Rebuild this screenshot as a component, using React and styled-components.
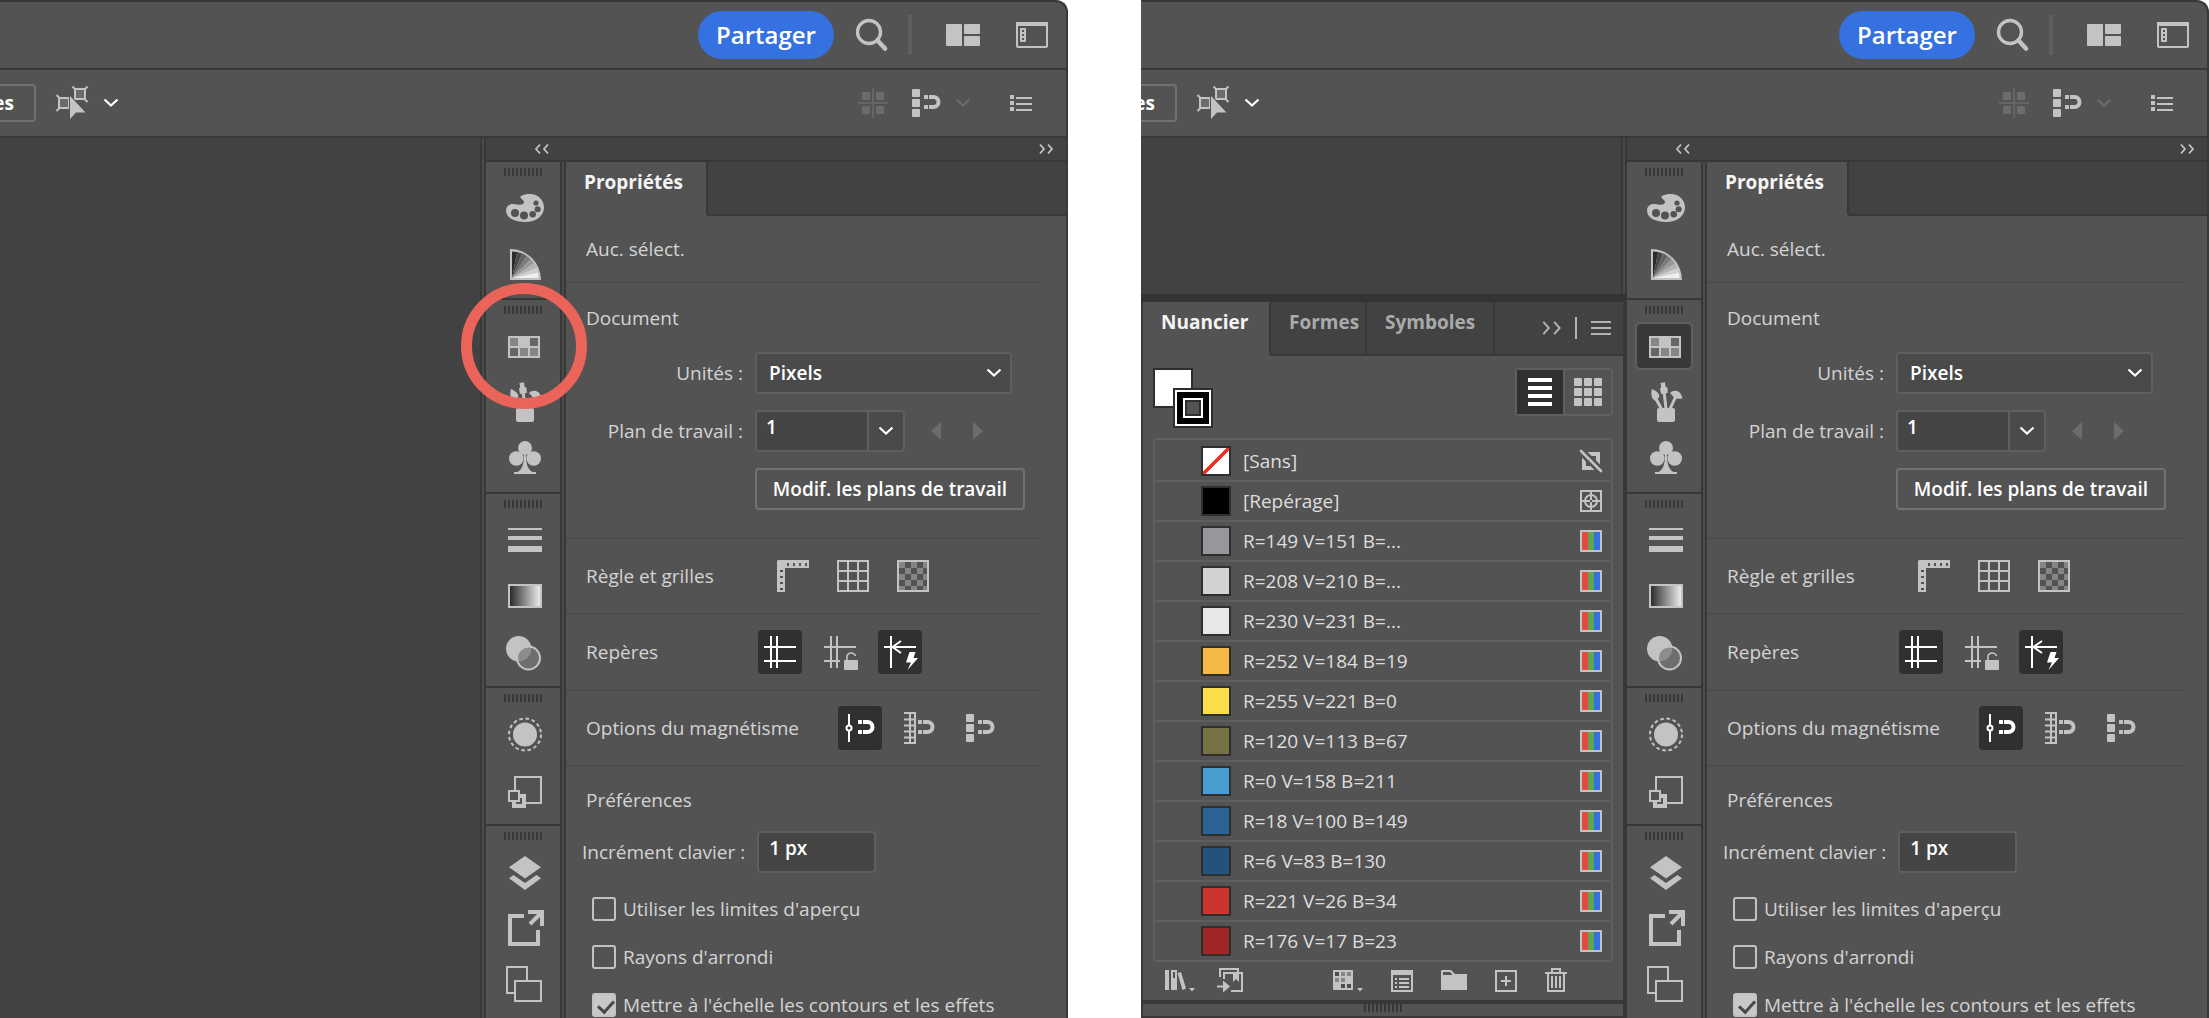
import React from "react";
import styled, { createGlobalStyle, css } from "styled-components";

const c = {
  panel: "#535353",
  canvas: "#424242",
  line: "#383838",
  seam: "#4a4a4a",
  edge: "#5f5f5f",
  icon: "#c3c3c3",
  text: "#d3d3d3",
  dim: "#6c6c6c",
  dark: "#323232",
};

const Global = createGlobalStyle`
  * { box-sizing: border-box; }
  body {
    margin: 0;
    background: #fff;
    overflow: hidden;
    font-family: "Open Sans", "Noto Sans", sans-serif;
    font-size: 19px;
    line-height: 28px;
    font-weight: 500;
    color: ${c.text};
  }
  button, input, select { font: inherit; color: inherit; margin: 0; padding: 0; }
  button { background: none; border: 0; }
  svg { display: block; overflow: visible; flex: none; }
`;

/* ---------- layout ---------- */

const Page = styled.main`
  display: grid;
  grid-template-columns: 1fr 1fr;
  column-gap: 73px;
  height: 100vh;
`;

const Shot = styled.section`
  position: relative;
  min-width: 0;
  min-height: 0;
`;

const AppWindow = styled.div`
  display: flex;
  flex-direction: column;
  height: 100%;
  overflow: hidden;
  background: ${c.panel};
  border: solid ${c.line};
  border-width: 2px 2px 0 0;
  border-radius: 0 12px 0 0;
`;

const Bar = styled.div`
  display: flex;
  align-items: center;
  justify-content: flex-end;
  flex: none;
  height: 68px;
  border-bottom: 2px solid ${c.line};
`;

const HeaderBar = styled(Bar)`
  gap: 20px;
  padding-right: 18px;
`;

const ToolBar = styled(Bar)`
  gap: 24px;
  padding-right: 34px;
`;

const IconButton = styled.button`
  display: flex;
  align-items: center;
  gap: 15px;
  color: ${(p) => (p.$dim ? c.dim : c.icon)};
  padding-left: ${(p) => p.$indent || 0}px;
`;

const ShareButton = styled.button`
  width: 136px;
  height: 48px;
  border-radius: 24px;
  background: #3571e0;
  color: #fff;
  font-size: 24px;
  font-weight: 600;
`;

const BarRule = styled.span`
  width: 4px;
  height: 40px;
  background: ${c.edge};
`;

const IconGroup = styled.div`
  display: flex;
  align-items: center;
  gap: ${(p) => p.$gap}px;
  margin-left: ${(p) => p.$indent || 0}px;
`;

const ToolLeft = styled.div`
  display: flex;
  align-items: center;
  gap: 20px;
  margin-right: auto;
`;

const CutButton = styled.button`
  display: flex;
  align-items: center;
  justify-content: flex-end;
  width: 36px;
  height: 38px;
  padding-right: 20px;
  overflow: hidden;
  border: 2px solid #717171;
  border-left: 0;
  border-radius: 0 4px 4px 0;
  color: #fff;
  font-weight: 700;
`;

const Workspace = styled.div`
  display: flex;
  flex: 1;
  min-height: 0;
`;

const CanvasColumn = styled.div`
  display: flex;
  flex-direction: column;
  flex: 1;
  min-width: 0;
`;

const Canvas = styled.div`
  flex: 1;
  background: ${c.canvas};
  border-right: 2px solid ${c.seam};
  box-shadow: inset -2px 0 0 ${c.line};
`;

const Side = styled.aside`
  display: flex;
  flex-direction: column;
  width: 582px;
  flex: none;
  border-left: 2px solid ${c.line};
`;

const Strip = styled.div`
  display: flex;
  align-items: center;
  justify-content: space-between;
  flex: none;
  height: 24px;
  padding: 0 13px 0 49px;
  background: ${c.canvas};
  border-bottom: 2px solid ${c.line};
  color: ${c.icon};
`;

const SideBody = styled.div`
  display: flex;
  flex: 1;
  min-height: 0;
`;

/* ---------- dock ---------- */

const Dock = styled.nav`
  width: 76px;
  flex: none;
  border-right: 2px solid ${c.line};
`;

const DockGroup = styled.div`
  display: flex;
  flex-direction: column;
  align-items: center;
  padding: 6px 0;
  border-bottom: 2px solid ${c.line};
  &:last-child { border-bottom: 0; }
`;

const Grip = styled.span`
  width: 38px;
  height: 8px;
  background: repeating-linear-gradient(90deg, ${c.line} 0 2px, transparent 2px 4px);
`;

const DockGrip = styled(Grip)`
  margin-bottom: 4px;
`;

const DockCell = styled.div`
  display: flex;
  align-items: center;
  justify-content: center;
  height: 56px;
`;

const DockButton = styled.button`
  display: flex;
  align-items: center;
  justify-content: center;
  width: 58px;
  height: 48px;
  border: 2px solid transparent;
  border-radius: 6px;
  color: ${c.icon};
  --hole: ${c.panel};
  ${(p) =>
    p.$active &&
    css`
      background: ${c.line};
      border-color: ${c.edge};
    `}
`;

/* ---------- properties panel ---------- */

const Properties = styled.section`
  flex: 1;
  min-width: 0;
  margin-left: 2px;
  border-left: 2px solid ${c.line};
  box-shadow: -2px 0 0 ${c.seam};
`;

const TabRow = styled.div`
  display: flex;
  height: 54px;
  background: ${c.canvas};
`;

const Tab = styled.button`
  width: ${(p) => p.$width}px;
  height: 54px;
  flex: none;
  padding: 0 0 12px 18px;
  text-align: left;
  white-space: nowrap;
  font-weight: 700;
  color: ${(p) => (p.$active ? "#f4f4f4" : "#aaaaaa")};
  background: ${(p) => (p.$active ? c.panel : "transparent")};
  border-right: 2px solid ${c.line};
  border-bottom: 2px solid ${(p) => (p.$active ? c.panel : c.line)};
`;

const TabRest = styled.div`
  display: flex;
  align-items: center;
  justify-content: flex-end;
  flex: 1;
  gap: 14px;
  padding-right: 12px;
  padding-bottom: 0;
  border-bottom: 2px solid ${c.line};
  color: #b4b4b4;
`;

const Section = styled.div`
  margin-right: 24px;
  padding: 19px 0 18px 20px;
  border-bottom: 2px solid #4c4c4c;
`;

const DocumentSection = styled(Section)`
  padding-top: 21px;
  padding-bottom: 27px;
`;

const Heading = styled.h2`
  margin: 0;
  font: inherit;
`;

const Form = styled.div`
  display: grid;
  grid-template-columns: 157px auto;
  column-gap: 12px;
  row-gap: 16px;
  align-items: center;
  justify-content: start;
  margin-top: 20px;
`;

const RightLabel = styled.label`
  text-align: right;
  white-space: nowrap;
`;

const SelectBox = styled.div`
  display: flex;
  align-items: center;
  position: relative;
  width: 257px;
  height: 42px;
  color: #fff;
  svg { position: absolute; right: 10px; pointer-events: none; }
`;

const Select = styled.select`
  appearance: none;
  width: 100%;
  height: 42px;
  padding: 0 36px 0 12px;
  background: #4a4a4a;
  border: 2px solid ${c.edge};
  border-radius: 4px;
  font-weight: 600;
`;

const Inline = styled.div`
  display: flex;
  align-items: center;
`;

const TextField = styled.input`
  width: ${(p) => p.$width}px;
  height: 42px;
  padding: 0 0 8px ${(p) => p.$pad}px;
  background: #454545;
  border: 2px solid ${c.edge};
  border-radius: ${(p) => (p.$joined ? "4px 0 0 4px" : "4px")};
  color: #fff;
  font-weight: 600;
`;

const DropButton = styled.button`
  display: flex;
  align-items: center;
  justify-content: center;
  width: 36px;
  height: 42px;
  background: #4a4a4a;
  border: 2px solid ${c.edge};
  border-left: 0;
  border-radius: 0 4px 4px 0;
  color: #fff;
`;

const Steps = styled.div`
  display: flex;
  gap: 32px;
  margin-left: 26px;
`;

const OutlineButton = styled.button`
  grid-column: 2;
  width: 270px;
  height: 42px;
  border: 2px solid #717171;
  border-radius: 4px;
  color: #fff;
  font-weight: 600;
  white-space: nowrap;
`;

const ToggleRow = styled.div`
  display: flex;
  align-items: center;
  height: 76px;
  margin-right: 24px;
  padding-left: 20px;
  border-bottom: 2px solid #4c4c4c;
`;

const ToggleLabel = styled.span`
  width: ${(p) => p.$width}px;
  white-space: nowrap;
`;

const ToggleSet = styled.div`
  display: flex;
  gap: 16px;
`;

const Toggle = styled.button`
  display: flex;
  align-items: center;
  justify-content: center;
  width: 44px;
  height: 44px;
  border-radius: 4px;
  background: ${(p) => (p.$active ? "#303030" : "transparent")};
  color: ${(p) => (p.$active ? "#fff" : c.icon)};
`;

const Preferences = styled.div`
  padding: 19px 0 0 20px;
`;

const KeyRow = styled.div`
  display: flex;
  align-items: center;
  gap: 12px;
  margin: 17px 0 24px -4px;
  white-space: nowrap;
`;

const CheckList = styled.div`
  display: flex;
  flex-direction: column;
  gap: 24px;
  padding-left: 6px;
`;

const CheckLabel = styled.label`
  display: flex;
  align-items: center;
  gap: 7px;
  height: 24px;
  white-space: nowrap;
`;

const CheckBox = styled.input`
  appearance: none;
  position: relative;
  flex: none;
  width: 24px;
  height: 24px;
  border: 2px solid ${c.icon};
  border-radius: 3px;
  &:checked { background: #c8c8c8; }
  &:checked::after {
    content: "";
    position: absolute;
    left: 7px;
    top: 2px;
    width: 7px;
    height: 13px;
    border: solid #484848;
    border-width: 0 3px 3px 0;
    transform: rotate(42deg);
  }
`;

/* ---------- swatches panel ---------- */

const Swatches = styled.section`
  flex: none;
  background: ${c.panel};
  border: solid ${c.line};
  border-width: 0 2px 2px 2px;
`;

const Band = styled.div`
  height: 8px;
  background: #343434;
`;

const SwatchBody = styled.div`
  padding: 12px 10px 0;
`;

const SwatchHead = styled.div`
  display: flex;
  align-items: flex-start;
  justify-content: space-between;
  height: 70px;
`;

const ViewSwitch = styled.div`
  display: flex;
  width: 98px;
  height: 48px;
  border: 2px solid ${c.edge};
  border-radius: 4px;
`;

const ViewButton = styled.button`
  display: flex;
  align-items: center;
  justify-content: center;
  width: ${(p) => (p.$active ? 46 : 48)}px;
  color: ${(p) => (p.$active ? "#fff" : c.icon)};
  background: ${(p) => (p.$active ? "#303030" : "transparent")};
  ${(p) => !p.$active && `border-left: 2px solid ${c.edge};`}
`;

const SwatchList = styled.ul`
  list-style: none;
  margin: 0;
  padding: 2px 1px 0 0;
  border: 2px solid ${c.edge};
  border-radius: 4px;
`;

const SwatchRow = styled.li`
  display: flex;
  align-items: center;
  height: 40px;
  padding: 0 8px 0 46px;
  border-bottom: 2px solid ${c.edge};
  color: #dedede;
  &:last-child { border-bottom-color: transparent; height: 38px; border-bottom-width: 0; }
`;

const Chip = styled.span`
  width: 30px;
  height: 30px;
  margin-right: 12px;
  border: 2px solid #2e2e2e;
  background: ${(p) => p.$color};
`;

const SwatchName = styled.span`
  flex: 1;
  white-space: nowrap;
`;

const Footer = styled.div`
  display: flex;
  align-items: center;
  justify-content: space-between;
  height: 38px;
  padding: 0 56px 2px 22px;
  border-bottom: 0;
`;

const ResizeBar = styled.div`
  display: flex;
  justify-content: center;
  height: 16px;
  border-top: 4px solid ${c.line};
`;

const Ring = styled.div`
  position: absolute;
  left: 461px;
  top: 283px;
  width: 126px;
  height: 126px;
  border: 11px solid #eb6459;
  border-radius: 50%;
  pointer-events: none;
`;

/* ---------- icons ---------- */

const Svg = ({ w, h, children }) => (
  <svg width={w} height={h} viewBox={`0 0 ${w} ${h}`} fill="currentColor" aria-hidden="true">
    {children}
  </svg>
);

const line = (width) => ({ fill: "none", stroke: "currentColor", strokeWidth: width });

const Chevron = () => (
  <Svg w={16} h={10}>
    <path d="M1.5 1.5L8 7.5L14.5 1.5" {...line(2.2)} />
  </Svg>
);

const DoubleChevron = ({ right, w = 14, h = 10 }) => (
  <svg width={w} height={h} viewBox="0 0 14 10" aria-hidden="true">
    <path
      d={right ? "M1 0.5L5 5L1 9.5M9 0.5L13 5L9 9.5" : "M5 0.5L1 5L5 9.5M13 0.5L9 5L13 9.5"}
      {...line(h > 10 ? 1.4 : 1.8)}
    />
  </svg>
);

const SearchIcon = () => (
  <Svg w={34} h={32}>
    <circle cx="15" cy="13" r="11.5" {...line(3.4)} />
    <path d="M23.5 21.5L31 29.5" {...line(4.6)} strokeLinecap="round" />
  </Svg>
);

const LayoutIcon = () => (
  <Svg w={34} h={22}>
    <rect width="16" height="22" rx="1" />
    <rect x="18" width="16" height="10" rx="1" />
    <rect x="18" y="12" width="16" height="10" rx="1" />
  </Svg>
);

const WindowIcon = () => (
  <Svg w={32} h={26}>
    <rect x="1" y="1" width="30" height="24" rx="1" {...line(2)} />
    <rect width="32" height="4" />
    <rect x="4" y="6" width="6" height="14" rx="1" />
    <path d="M6 8h2v2H6zM6 12h2v2H6zM6 16h2v2H6z" fill={c.panel} />
  </Svg>
);

const SelectIcon = () => (
  <Svg w={32} h={34}>
    <rect x="3" y="12" width="10" height="10" fill="#6c6c6c" stroke="currentColor" strokeWidth="2" />
    <rect x="19" y="3" width="10" height="10" fill="#6c6c6c" stroke="currentColor" strokeWidth="2" />
    <path d="M0.5 9L3 11.5M0.5 25L3 22.5M16.5 0.5L19 3M31.5 0.5L29 3M31.5 16L29 13.5" {...line(2)} />
    <path d="M14 10V33L20 26.5L29.5 26.5Z" stroke={c.panel} strokeWidth="2" paintOrder="stroke" />
  </Svg>
);

const AlignIcon = () => (
  <Svg w={30} h={30}>
    <rect x="4" y="4" width="8" height="8" rx="1" />
    <rect x="18" y="4" width="8" height="8" rx="1" />
    <rect x="4" y="18" width="8" height="8" rx="1" />
    <rect x="18" y="18" width="8" height="8" rx="1" />
    <path d="M15 0V30M0 15H30" stroke="#656565" strokeWidth="2" />
  </Svg>
);

const Magnet = () => (
  <>
    <rect x="12" y="6" width="4" height="4" rx="0.5" />
    <rect x="12" y="16" width="4" height="4" rx="0.5" />
    <path d="M17 8H21.5A5 5 0 0 1 21.5 18H17" {...line(4)} />
  </>
);

const PixelSnapShape = () => (
  <>
    <rect width="8" height="8" rx="1" />
    <rect y="10" width="8" height="8" rx="1" />
    <rect y="20" width="8" height="8" rx="1" />
    <Magnet />
  </>
);

const BulletsIcon = () => (
  <Svg w={22} h={16}>
    <path d="M0 0h4v4H0zM0 6h4v4H0zM0 12h4v4H0zM6 2h16v2H6zM6 8h16v2H6zM6 14h16v2H6z" />
  </Svg>
);

const fanTones = ["#2b2b2b", "#484848", "#626262", "#7d7d7d", "#999", "#b4b4b4", "#d0d0d0", "#f0f0f0"];
const fanPoint = (i) => {
  const a = (Math.PI / 2) * (1 - i / fanTones.length);
  return `${9 + 26.5 * Math.cos(a)} ${34 - 26.5 * Math.sin(a)}`;
};

const dockArt = {
  palette: (
    <>
      <path d="M17.5 8.5C20 6.5 24 6 27 6C35 6 41 12 41 19.5C41 28 33 34 22 34C10 34 3 29 3 22.5C3 18 6.5 15.5 11 16C15 16.8 20 17.5 21 14.5C21.5 12 16.5 10.5 17.5 8.5Z" />
      <g fill={c.panel}>
        <circle cx="12" cy="25" r="4" />
        <circle cx="21" cy="27.6" r="4" />
        <circle cx="29.7" cy="26.3" r="3.3" />
        <circle cx="34.7" cy="21.3" r="3" />
        <circle cx="33" cy="15" r="2.6" />
      </g>
    </>
  ),
  fan: (
    <>
      <path d="M7 36V5A31 31 0 0 1 38 36Z" />
      {fanTones.map((tone, i) => (
        <path key={tone} fill={tone} d={`M9 34L${fanPoint(i)}A26.5 26.5 0 0 1 ${fanPoint(i + 1)}Z`} />
      ))}
    </>
  ),
  swatches: (
    <>
      <rect x="5" y="10" width="32" height="22" />
      <path fill="#868686" d="M7 12h8v8H7zM17 22h8v8h-8zM27 22h8v8h-8z" />
      <path fill="#666" d="M27 12h8v8h-8zM7 22h8v8H7z" />
    </>
  ),
  brushes: (
    <>
      <rect x="13" y="26" width="18" height="14" rx="2" />
      <path d="M11.5 16L17.5 27M20 9L22 27M31.5 15L26 27" {...line(3)} />
      <path d="M8 7C12 9 15.5 11 15.3 15L11.5 19C7.5 17 6.5 12 8 7Z" />
      <path d="M16.5 1L21 0.3L21.6 5L23.5 5.5L23.8 11L17 12L16 6.5L17.2 5.5Z" />
      <path d="M26 11C30 7 37 8 38.5 16.5C35 17 32 17 30.5 16Z" />
    </>
  ),
  club: (
    <>
      <circle cx="22" cy="10" r="7" />
      <circle cx="13.3" cy="20.5" r="7.3" />
      <circle cx="30.7" cy="20.5" r="7.3" />
      <path d="M21 17h2c0 9 2 15 6.500 17H33v2H11v-2h3.500C19 32 21 26 21 17z" />
    </>
  ),
  stroke: <path d="M5 8h34v2H5zM5 16h34v4H5zM5 26h34v6H5z" />,
  gradient: (
    <>
      <defs>
        <linearGradient id="ramp">
          <stop offset="0" stopColor="#262626" />
          <stop offset="1" stopColor="#f2f2f2" />
        </linearGradient>
      </defs>
      <rect x="6" y="9" width="32" height="22" fill="url(#ramp)" stroke="currentColor" strokeWidth="2" />
    </>
  ),
  transparency: (
    <>
      <circle cx="15.700" cy="16.800" r="12.700" />
      <circle cx="25.500" cy="26" r="11.500" fill="#6e6e6e" />
      <path d="M14.500 29.400A12.700 12.700 0 0 0 28.200 15A11.500 11.500 0 0 0 14.500 29.400Z" fill="#8c8c8c" />
      <circle cx="25.500" cy="26" r="11.500" {...line(2)} />
    </>
  ),
  appearance: (
    <>
      <circle cx="22" cy="20.500" r="12" />
      <circle cx="22" cy="20.500" r="16" {...line(2)} strokeDasharray="3.600 2.680" />
    </>
  ),
  styles: (
    <>
      <rect x="12" y="7" width="26" height="26" {...line(2)} />
      <rect x="9" y="24" width="14" height="14" />
      <rect x="13" y="28" width="6" height="6" fill={c.panel} />
      <rect x="6" y="21" width="10" height="10" fill={c.panel} stroke="currentColor" strokeWidth="2" />
    </>
  ),
  layers: (
    <>
      <path d="M22 4L38 15.300L22 26.500L6 15.300Z" />
      <path d="M10.500 23L22 31L33.500 23L38 26.300L22 38L6 26.300Z" />
    </>
  ),
  exportAsset: (
    <>
      <path d="M21 8H7V36H35V22" {...line(4)} />
      <path d="M25 4H39V18M38 5L27 16" {...line(4)} />
    </>
  ),
  artboards: (
    <>
      <rect x="4" y="3" width="20" height="26" {...line(2)} />
      <rect x="12" y="17" width="26" height="20" fill={c.panel} stroke="currentColor" strokeWidth="2" />
    </>
  ),
};

const GuideLines = ({ short }) => (
  <path d={`M7 0V32M13 0V32M0 11H32M0 25H${short ? 16 : 32}`} {...line(2)} />
);

const toggleArt = {
  ruler: (
    <>
      <path d="M1 0H32V8H8V32H0V1z" />
      <path fill={c.panel} d="M10 3h2v3h-2zM16 3h2v3h-2zM22 3h2v3h-2zM28 3h2v3h-2zM3 10h3v2H3zM3 16h3v2H3zM3 22h3v2H3zM3 28h3v2H3z" />
    </>
  ),
  grid: <path d="M1 1H31V31H1ZM11 1V31M21 1V31M1 11H31M1 21H31" {...line(2)} />,
  checker: (
    <>
      <path fill="#858585" d="M2 2h6v6H2zM14 2h6v6h-6zM26 2h4v6h-4zM8 8h6v6H8zM20 8h6v6h-6zM2 14h6v6H2zM14 14h6v6h-6zM26 14h4v6h-4zM8 20h6v6H8zM20 20h6v6h-6zM2 26h6v4H2zM14 26h6v4h-6zM26 26h4v4h-4z" />
      <rect x="1" y="1" width="30" height="30" {...line(2)} />
    </>
  ),
  guides: <GuideLines />,
  lockGuides: (
    <>
      <GuideLines short />
      <rect x="20" y="24" width="14" height="10" rx="1" />
      <path d="M23 25V20A4.500 4.500 0 0 1 31.500 20" {...line(1.600)} />
    </>
  ),
  smart: (
    <>
      <path d="M7 0V32M0 11H32M17 5L8.500 11L17 17" {...line(2)} />
      <path d="M25.500 16H31.500L29.500 22H34L23.500 34L27 26.500H22Z" />
    </>
  ),
  snapPoint: (
    <g transform="translate(2 2)">
      <path d="M3 0V11M3 17V28" {...line(2)} />
      <circle cx="3" cy="14" r="2.500" {...line(2)} />
      <Magnet />
    </g>
  ),
  snapGrid: (
    <g transform="translate(0 2)">
      <path d="M6 -2V30M11 -2V30M0 -1H12M0 5.500H12M0 11.500H12M0 17.500H12M0 23.500H12M0 29H12" {...line(2)} />
      <g transform="translate(2 0)">
        <Magnet />
      </g>
    </g>
  ),
  snapPixel: (
    <g transform="translate(2 2)">
      <PixelSnapShape />
    </g>
  ),
};

const Arrow = ({ right }) => (
  <Svg w={10} h={18}>
    <path d={right ? "M0 0L10 9L0 18Z" : "M10 0L0 9L10 18Z"} />
  </Svg>
);

const FillStroke = () => (
  <Svg w={60} h={60}>
    <rect x="1" y="1" width="38" height="38" fill="#fff" stroke="#2e2e2e" strokeWidth="2" />
    <rect x="20" y="20" width="40" height="40" fill="#2e2e2e" />
    <rect x="22" y="22" width="36" height="36" fill="#fff" />
    <rect x="24" y="24" width="32" height="32" fill="#000" />
    <rect x="30" y="30" width="20" height="20" fill="#fff" />
    <rect x="32" y="32" width="16" height="16" fill="#2e2e2e" />
    <rect x="34" y="34" width="12" height="12" fill={c.panel} />
  </Svg>
);

const kindArt = {
  none: (
    <>
      <rect x="4" y="4" width="14" height="14" {...line(4)} />
      <path d="M0 0L22 22" stroke={c.panel} strokeWidth="8" />
      <path d="M1 1L21 21" {...line(2.600)} strokeLinecap="round" />
    </>
  ),
  registration: (
    <>
      <rect x="1" y="1" width="20" height="20" {...line(2)} />
      <circle cx="11" cy="11" r="6" {...line(2)} />
      <path d="M11 1V21M1 11H21" {...line(2)} />
      <rect x="10" y="10" width="2" height="2" fill={c.panel} />
    </>
  ),
  rgb: (
    <>
      <rect width="22" height="22" rx="1" />
      <rect x="2" y="2" width="6" height="18" fill="#e24a42" />
      <rect x="8" y="2" width="6" height="18" fill="#5fa653" />
      <rect x="14" y="2" width="6" height="18" fill="#3571e0" />
    </>
  ),
};

const footLeft = [
  ["Bibliothèques", 30, (
    <>
      <path d="M0 2h4v20H0zM6 2h6v20H6zM12.500 5L16 4L21 20.500L17.500 22zM24 20h6l-3 3.500z" />
      <rect x="8" y="4" width="2" height="6" fill={c.panel} />
    </>
  )],
  ["Ajouter à la bibliothèque", 26, (
    <>
      <path d="M3 9V1H21V5M7 11V5H25V23H14" {...line(2)} />
      <path d="M16 5H22V14L19 11L16 14ZM0 17.500H6V12.500L13 18.500L6 24.500V19.500H0Z" />
    </>
  )],
];

const footRight = [
  ["Types de nuances", 30, (
    <>
      <rect y="2" width="20" height="20" rx="1" />
      <path fill="#4d4d4d" d="M2 4h4v4H2zM8 16h4v4H8zM14 16h4v4h-4z" />
      <path fill="#868686" d="M8 4h4v4H8zM14 4h4v4h-4zM2 10h4v4H2zM8 10h4v4H8z" />
      <path d="M24 20h6l-3 3.500z" />
    </>
  )],
  ["Options de nuance", 22, (
    <>
      <rect x="1" y="3" width="20" height="20" {...line(2)} />
      <path d="M0 2h22v5H0zM4 10h2v2H4zM8 10h10v2H8zM4 14h2v2H4zM8 14h10v2H8zM4 18h2v2H4zM8 18h10v2H8z" />
    </>
  )],
  ["Nouveau groupe", 26, (
    <>
      <path d="M1 2H10L14 6H26V22H0V3Z" />
      <path d="M2 4H9L11.500 7H2Z" fill={c.panel} />
    </>
  )],
  ["Nouvelle nuance", 22, (
    <>
      <rect x="1" y="3" width="20" height="20" {...line(2)} />
      <path d="M11 8V18M6 13H16" {...line(2)} />
    </>
  )],
  ["Supprimer", 22, (
    <>
      <path d="M0 5H22M7 5V1H15V5M3 6V23H19V6M7 8V20M11 8V20M15 8V20" {...line(2)} />
    </>
  )],
];

/* ---------- data ---------- */

const dockGroups = [
  [["palette", "Couleur"], ["fan", "Guide des couleurs"]],
  [["swatches", "Nuancier"], ["brushes", "Formes"], ["club", "Symboles"]],
  [["stroke", "Contour"], ["gradient", "Dégradé"], ["transparency", "Transparence"]],
  [["appearance", "Aspect"], ["styles", "Styles graphiques"]],
  [["layers", "Calques"], ["exportAsset", "Exportation"], ["artboards", "Plans de travail"]],
];

const toggleRows = [
  { label: "Règle et grilles", width: 185, items: ["ruler", "grid", "checker"], on: [] },
  { label: "Repères", width: 172, items: ["guides", "lockGuides", "smart"], on: ["guides", "smart"] },
  { label: "Options du magnétisme", width: 252, items: ["snapPoint", "snapGrid", "snapPixel"], on: ["snapPoint"] },
];

const swatchRows = [
  ["[Sans]", "linear-gradient(135deg, #fff 46%, #ee3124 46% 54%, #fff 54%)", "none"],
  ["[Repérage]", "#000", "registration"],
  ["R=149 V=151 B=...", "#95979a", "rgb"],
  ["R=208 V=210 B=...", "#d0d2d3", "rgb"],
  ["R=230 V=231 B=...", "#e6e7e8", "rgb"],
  ["R=252 V=184 B=19", "#f2ba45", "rgb"],
  ["R=255 V=221 B=0", "#f9de4a", "rgb"],
  ["R=120 V=113 B=67", "#777146", "rgb"],
  ["R=0 V=158 B=211", "#479dd0", "rgb"],
  ["R=18 V=100 B=149", "#2d6392", "rgb"],
  ["R=6 V=83 B=130", "#23527e", "rgb"],
  ["R=221 V=26 B=34", "#cd342e", "rgb"],
  ["R=176 V=17 B=23", "#9f2622", "rgb"],
];

/* ---------- parts ---------- */

function Header() {
  return (
    <HeaderBar as="header">
      <ShareButton>Partager</ShareButton>
      <IconButton aria-label="Rechercher"><SearchIcon /></IconButton>
      <BarRule />
      <IconGroup $gap={36} $indent={14}>
        <IconButton aria-label="Espace de travail"><LayoutIcon /></IconButton>
        <IconButton aria-label="Fenêtre"><WindowIcon /></IconButton>
      </IconGroup>
    </HeaderBar>
  );
}

function Tools() {
  return (
    <ToolBar>
      <ToolLeft>
        <CutButton>es</CutButton>
        <IconButton aria-label="Sélection" style={undefined}>
          <SelectIcon />
          <WhiteChevron><Chevron /></WhiteChevron>
        </IconButton>
      </ToolLeft>
      <IconButton $dim aria-label="Aligner"><AlignIcon /></IconButton>
      <IconButton aria-label="Magnétisme">
        <Svg w={28} h={28}><PixelSnapShape /></Svg>
        <DimChevron><Chevron /></DimChevron>
      </IconButton>
      <IconButton $indent={15} aria-label="Options"><BulletsIcon /></IconButton>
    </ToolBar>
  );
}

const WhiteChevron = styled.span`
  color: #fff;
`;

const DimChevron = styled.span`
  color: ${c.dim};
`;

function DockPanel({ active }) {
  return (
    <Dock>
      {dockGroups.map((group) => (
        <DockGroup key={group[0][0]}>
          <DockGrip />
          {group.map(([id, label]) => (
            <DockCell key={id}>
              <DockButton aria-label={label} $active={active === id}>
                <Svg w={40} h={40}>{dockArt[id]}</Svg>
              </DockButton>
            </DockCell>
          ))}
        </DockGroup>
      ))}
    </Dock>
  );
}

function PropertiesPanel({ id }) {
  return (
    <Properties>
      <TabRow>
        <Tab $active $width={142}>Propriétés</Tab>
        <TabRest />
      </TabRow>
      <Section>
        <Heading>Auc. sélect.</Heading>
      </Section>
      <DocumentSection>
        <Heading>Document</Heading>
        <Form>
          <RightLabel htmlFor={`${id}-units`}>Unités :</RightLabel>
          <SelectBox>
            <Select id={`${id}-units`} defaultValue="Pixels">
              <option>Pixels</option>
            </Select>
            <Chevron />
          </SelectBox>
          <RightLabel htmlFor={`${id}-board`}>Plan de travail :</RightLabel>
          <Inline>
            <TextField id={`${id}-board`} $width={114} $pad={9} $joined defaultValue="1" />
            <DropButton aria-label="Choisir un plan de travail"><Chevron /></DropButton>
            <Steps>
              <IconButton $dim aria-label="Précédent"><Arrow /></IconButton>
              <IconButton $dim aria-label="Suivant"><Arrow right /></IconButton>
            </Steps>
          </Inline>
          <OutlineButton>Modif. les plans de travail</OutlineButton>
        </Form>
      </DocumentSection>
      {toggleRows.map((row) => (
        <ToggleRow key={row.label}>
          <ToggleLabel $width={row.width}>{row.label}</ToggleLabel>
          <ToggleSet>
            {row.items.map((item) => (
              <Toggle key={item} aria-label={item} $active={row.on.includes(item)}>
                <Svg w={32} h={32}>{toggleArt[item]}</Svg>
              </Toggle>
            ))}
          </ToggleSet>
        </ToggleRow>
      ))}
      <Preferences>
        <Heading>Préférences</Heading>
        <KeyRow>
          <label htmlFor={`${id}-key`}>Incrément clavier :</label>
          <TextField id={`${id}-key`} $width={119} $pad={10} defaultValue="1 px" />
        </KeyRow>
        <CheckList>
          <CheckLabel><CheckBox type="checkbox" />Utiliser les limites d'aperçu</CheckLabel>
          <CheckLabel><CheckBox type="checkbox" />Rayons d'arrondi</CheckLabel>
          <CheckLabel><CheckBox type="checkbox" defaultChecked />Mettre à l'échelle les contours et les effets</CheckLabel>
        </CheckList>
      </Preferences>
    </Properties>
  );
}

function FooterButtons({ items, gap }) {
  return (
    <IconGroup $gap={gap}>
      {items.map(([label, w, art]) => (
        <IconButton key={label} aria-label={label}>
          <Svg w={w} h={24}>{art}</Svg>
        </IconButton>
      ))}
    </IconGroup>
  );
}

function SwatchesPanel() {
  return (
    <>
      <Band />
      <Swatches>
        <TabRow>
          <Tab $active $width={128}>Nuancier</Tab>
          <Tab $width={96}>Formes</Tab>
          <Tab $width={128}>Symboles</Tab>
          <TabRest>
            <DoubleChevron right w={19} h={14} />
            <Svg w={2} h={22}><rect width="2" height="22" /></Svg>
            <Svg w={20} h={14}><path d="M0 0h20v2H0zM0 6h20v2H0zM0 12h20v2H0z" /></Svg>
          </TabRest>
        </TabRow>
        <SwatchBody>
          <SwatchHead>
            <FillStroke />
            <ViewSwitch>
              <ViewButton $active aria-label="Liste">
                <Svg w={24} h={28}><path d="M0 0h24v4H0zM0 8h24v4H0zM0 16h24v4H0zM0 24h24v4H0z" /></Svg>
              </ViewButton>
              <ViewButton aria-label="Vignettes">
                <Svg w={28} h={28}>
                  {[0, 10, 20].map((y) => [0, 10, 20].map((x) => (
                    <rect key={`${x}-${y}`} x={x} y={y} width="8" height="8" rx="1" />
                  )))}
                </Svg>
              </ViewButton>
            </ViewSwitch>
          </SwatchHead>
          <SwatchList>
            {swatchRows.map(([name, color, kind]) => (
              <SwatchRow key={name}>
                <Chip $color={color} />
                <SwatchName>{name}</SwatchName>
                <IconButton as="span"><Svg w={22} h={22}>{kindArt[kind]}</Svg></IconButton>
              </SwatchRow>
            ))}
          </SwatchList>
        </SwatchBody>
        <Footer>
          <FooterButtons items={footLeft} gap={22} />
          <FooterButtons items={footRight} gap={28} />
        </Footer>
        <ResizeBar><Grip /></ResizeBar>
      </Swatches>
    </>
  );
}

function Illustrator({ id, open }) {
  return (
    <AppWindow>
      <Header />
      <Tools />
      <Workspace>
        <CanvasColumn>
          <Canvas />
          {open && <SwatchesPanel />}
        </CanvasColumn>
        <Side>
          <Strip>
            <DoubleChevron />
            <DoubleChevron right />
          </Strip>
          <SideBody>
            <DockPanel active={open ? "swatches" : null} />
            <PropertiesPanel id={id} />
          </SideBody>
        </Side>
      </Workspace>
    </AppWindow>
  );
}

export default function App() {
  return (
    <>
      <Global />
      <Page>
        <Shot>
          <Illustrator id="before" />
          <Ring />
        </Shot>
        <Shot>
          <Illustrator id="after" open />
        </Shot>
      </Page>
    </>
  );
}
